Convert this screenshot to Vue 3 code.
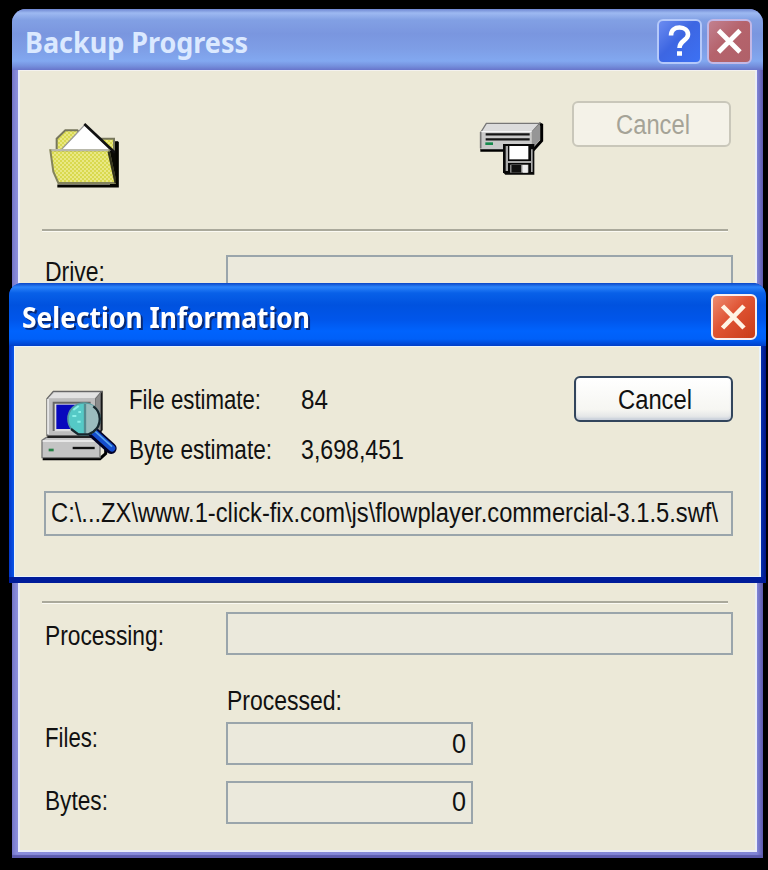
<script setup>
import { h } from 'vue'

// Single line of dialog text, condensed to a given advance width.
const Label = (props) =>
  h('svg', { class: 'label', width: props.w, height: 32 }, [
    h('text', { x: 0, y: 24, textLength: props.w, lengthAdjust: 'spacingAndGlyphs', fill: 'currentColor' }, props.text),
  ])
Label.props = ['text', 'w']

const counters = [
  { name: 'Files:', w: 53, value: '0', cls: 'files' },
  { name: 'Bytes:', w: 63, value: '0', cls: 'bytes' },
]
</script>

<template>
  <main class="desktop">
    <section class="window back">
      <header class="titlebar">
        <Label class="title" text="Backup Progress" :w="223" />
        <button class="caption help">
          <svg width="41" height="41" viewBox="2 2 41 41" fill="none" stroke="#fff" stroke-width="4.6">
            <path d="M14 16.500c0-5.500 4-8 8.500-8 5 0 8.500 3 8.500 7 0 6-8.500 6-8.500 13.500" />
            <path d="M20 34.500h5" stroke-width="4.500" />
          </svg>
        </button>
        <button class="caption close">
          <svg width="41" height="41" viewBox="2 2 41 41" stroke="#fff" stroke-width="4.8"><path d="M11.500 11.500 33 33M33 11.500 11.500 33" /></svg>
        </button>
      </header>
      <div class="body">
        <div class="top">
          <svg class="folder" width="100" height="90" viewBox="0 0 300 270">
            <defs>
              <pattern id="weave" width="12" height="12" patternUnits="userSpaceOnUse">
                <rect width="12" height="12" fill="#d9d94f" />
                <path d="M0 0h6v6H0zM6 6h6v6H6z" fill="#e9e884" />
              </pattern>
            </defs>
            <path d="M68 231h178V94h-9L222 116v110z" fill="#0a0a04" />
            <path d="M62 121V86L88 61H124L148 86H234V120z" fill="url(#weave)" stroke="#77775c" stroke-width="6" />
            <path d="M76 119 147 44 224 120z" fill="#fff" stroke="#999" stroke-width="4" />
            <path d="M145 42 237 128" stroke="#111" stroke-width="8" />
            <path d="M43 121H218L239 219H67L52 185z" fill="url(#weave)" stroke="#84845b" stroke-width="6" />
            <path d="M46 120H218" stroke="#b9b9ab" stroke-width="6" />
            <path d="M218 125 239 219" stroke="#33331c" stroke-width="7" />
            <path d="M64 228H244V95" fill="none" stroke="#050500" stroke-width="9" />
          </svg>
          <svg class="drive" width="90" height="75" viewBox="0 0 270 225">
            <path d="M46 121H204L230 92V45L222 41" fill="none" stroke="#000" stroke-width="9" />
            <path d="M64 40H224L201 66H48z" fill="#dcdcdc" stroke="#777" stroke-width="4" />
            <path d="M48 63H200V118H48z" fill="#c9c9c9" />
            <path d="M200 65 225 42V90L200 118z" fill="#969696" />
            <path d="M47 66V115" stroke="#777" stroke-width="5" />
            <path d="M50 65H200" stroke="#f6f6f6" stroke-width="4" />
            <path d="M62 73H194M62 88H194" stroke="#151515" stroke-width="7" />
            <path d="M61 101H84" stroke="#168a4d" stroke-width="8" />
            <path d="M114 102H208V194H121L114 187z" fill="#080808" />
            <path d="M122 108h7v75h-7zM198 118h5v68h-5z" fill="#aaa" />
            <path d="M133 108H190V148H133z" fill="#fff" />
            <path d="M127 153H198V159H127z" fill="#aaa" />
            <path d="M136 164H190V188H136z" fill="#c7c7c7" />
            <path d="M139 165H169V188H139z" fill="#111" />
            <path d="M174 165H188V188H174z" fill="#eee" />
          </svg>
          <button class="push disabled" disabled><Label text="Cancel" :w="74" /></button>
        </div>
        <div class="rule"></div>
        <div class="row drive-row"><Label text="Drive:" :w="60" /><div class="field"></div></div>
        <div class="rule second"></div>
        <div class="row processing-row"><Label text="Processing:" :w="119" /><div class="field"></div></div>
        <div class="heading"><Label text="Processed:" :w="115" /></div>
        <div v-for="c in counters" :key="c.name" class="row" :class="c.cls">
          <Label :text="c.name" :w="c.w" />
          <div class="field short"><Label :text="c.value" :w="14" /></div>
        </div>
      </div>
    </section>

    <section class="window front">
      <header class="titlebar">
        <Label class="title" text="Selection Information" :w="288" />
        <button class="caption close">
          <svg width="42" height="42" viewBox="2 2 42 42" stroke="#fff4e4" stroke-width="4.6"><path d="M11.500 12 33 34M33 12 11.500 34" /></svg>
        </button>
      </header>
      <div class="body">
        <div class="top">
          <svg class="computer" width="100" height="95" viewBox="0 0 300 285">
            <path d="M198 55 218 48V165L202 190H56V174z" fill="#171717" />
            <path d="M51 71 70 49H215L197 72V182H51z" fill="#bdbdbd" stroke="#666" stroke-width="4" />
            <path d="M55 70 72 53H209L194 69z" fill="#e2e2e2" />
            <path d="M197 72 212 53V165L197 182z" fill="#8b8b8b" />
            <path d="M54 72V178" stroke="#eee" stroke-width="5" />
            <path d="M71 84H181V169H71z" fill="#dedede" />
            <path d="M71 168V83H182" fill="none" stroke="#666" stroke-width="6" />
            <path d="M79 89H174V162H79z" fill="#0808bd" />
            <path d="M38 251H210L227 236V190" fill="none" stroke="#000" stroke-width="9" />
            <path d="M36 196 49 187H223L210 198V248H36z" fill="#c4c4c4" stroke="#777" stroke-width="4" />
            <path d="M52 186H200" stroke="#222" stroke-width="6" />
            <path d="M38 198H210" stroke="#f3f3f3" stroke-width="5" />
            <path d="M128 219H194" stroke="#111" stroke-width="7" />
            <path d="M56 225H71" stroke="#278247" stroke-width="8" />
            <path d="M192 174 243 220" stroke="#020228" stroke-width="34" stroke-linecap="round" />
            <path d="M192 172 246 220" stroke="#154dce" stroke-width="20" stroke-linecap="round" />
            <path d="M194 168 246 215" stroke="#5aa7ed" stroke-width="5" />
            <circle cx="162" cy="132" r="48" fill="#55c9c6" stroke="#559c9f" stroke-width="5" />
            <path d="M166 86A46 46 0 0 1 166 178z" fill="#9bbcbd" />
            <path d="M165 87V176" stroke="#558c90" stroke-width="7" />
            <path d="M190 94A47 47 0 0 1 190 170L176 178H145L123 162" fill="none" stroke="#17262c" stroke-width="7" />
            <path d="M130 105 146 93M127 123h12M142 140h10M145 111h8" stroke="#8aefe8" stroke-width="6" />
          </svg>
          <div class="facts">
            <Label text="File estimate:" :w="132" /><Label text="84" :w="27" />
            <Label text="Byte estimate:" :w="143" /><Label text="3,698,451" :w="103" />
          </div>
          <button class="push"><Label text="Cancel" :w="74" /></button>
        </div>
        <div class="field path"><Label text="C:\...ZX\www.1-click-fix.com\js\flowplayer.commercial-3.1.5.swf\" :w="667" /></div>
      </div>
    </section>
  </main>
</template>

<style>
body { background: #000; margin: 0; }
</style>

<style scoped>
* { box-sizing: border-box; }
.desktop { position: relative; width: 768px; height: 870px; background: #000; font: 27px "Liberation Sans", sans-serif; color: #111; padding: 9px 5px 0 12px; }
.label { display: block; overflow: visible; flex: none; }
button { padding: 0; font: inherit; color: inherit; }
.window { display: flex; flex-direction: column; }
.body { flex: 1; background: #ece9d8; min-height: 0; }
.titlebar { display: flex; flex: none; }
.title { font-family: "Noto Sans", "Open Sans", sans-serif; font-weight: bold; font-size: 28px; margin-right: auto; }

.back { width: 751px; height: 849px; padding: 0 6px 6px; border-radius: 14px 14px 0 0; background: linear-gradient(90deg, #7476c8, #8a8ddc 5px, #8185d6 745px, #5c59ac); box-shadow: inset 0 -3px 1px #5c5bad; }
.back > .titlebar { height: 61px; margin: 0 -6px; padding: 10px 11px 0 13px; border-radius: 14px 14px 0 0; background: linear-gradient(#6e86d2 0, #9db9f1 4px, #82a0e4 11px, #7a96df 25px, #7e9ee6 40px, #82a8f0 52px, #7590dd 57px, #6875cb 61px); }
.back .title { color: #dbe9ff; margin-top: 10px; }
.back > .body { border: 2px solid #eaedf8; border-top: 1px solid #f4f2ef; }

.caption { width: 45px; height: 45px; border: 2px solid #b5c9fa; border-radius: 6px; display: grid; place-items: center; flex: none; }
.help { background: linear-gradient(135deg, #6c8cf0, #3d66e2 45%, #3c71f4); margin-right: 5px; }
.back .close { background: linear-gradient(135deg, #c28190, #b5636c 45%, #b06169); border-color: #c3b8e6; }

.back .top { display: flex; align-items: flex-start; height: 158px; }
.folder { margin: 39px 0 0 16px; }
.drive { margin: 39px 17px 0 329px; }
.push { width: 159px; height: 46px; border: 2px solid #32455c; border-radius: 6px; background: linear-gradient(#fff, #f6f6f2 75%, #dcdfe2); display: flex; justify-content: center; }
.disabled { background: #f4f2e8; border-color: #c9c7ba; color: #a5a397; margin-top: 30px; padding: 7px 0 0 3px; }

.rule { width: 686px; height: 3px; margin-left: 22px; background: #aaa99b; border-bottom: 1px solid #fbfaf3; }
.row { display: grid; grid-template-columns: 181px auto; justify-content: start; align-items: start; padding-left: 25px; height: 43px; }
.field { width: 507px; height: 43px; border: 2px solid #9aa5ab; background: #ebe9dc; display: flex; }
.short { width: 247px; justify-content: flex-end; padding-right: 5px; }
.drive-row { margin-top: 23px; }
.drive-row > .label { margin-top: 2px; }
.second { margin-top: 303px; }
.processing-row { margin-top: 8px; }
.processing-row > .label { margin-top: 9px; }
.heading { padding: 31px 0 0 207px; height: 67px; }
.files > .label { margin-top: 1px; }
.files .field .label { margin-top: 5px; }
.bytes { margin-top: 16px; }
.bytes > .label { margin-top: 5px; }
.bytes .field .label { margin-top: 4px; }

.front { position: absolute; left: 9px; top: 283px; width: 757px; height: 300px; padding: 0 5px 6px; border-radius: 13px 13px 0 0; background: linear-gradient(90deg, #0436c8, #0855e8 5px, #0436b8 751px, #001584); box-shadow: inset 0 -6px 0 #001c9a; }
.front > .titlebar { height: 63px; margin: 0 -5px; padding: 11px 9px 0 13px; border-radius: 13px 13px 0 0; background: linear-gradient(#0a45c6 0, #2b83fa 4px, #0860e8 10px, #0052df 22px, #0056eb 37px, #0063fd 48px, #0060f8 56px, #003fc8 63px); }
.front .title { color: #fff; margin-top: 10px; filter: drop-shadow(2px 2px 0 #092a77); }
.front .caption { width: 46px; height: 46px; border-color: #f8eeee; background: linear-gradient(135deg, #ee8c70, #df5333 45%, #c93d19); }
.front > .body { border: 1px solid #e9f3fb; border-right-width: 2px; }
.front .top { display: flex; align-items: flex-start; height: 144px; }
.computer { flex: none; margin: 28px 0 0 15px; }
.facts { display: grid; grid-template-columns: 172px 272px; row-gap: 18px; flex: none; margin: 38px 0 0 -1px; }
.front .push { margin: 29px 0 0 1px; padding: 7px 0 0 3px; box-shadow: inset 0 -2px 2px #cbd1dc; flex: none; }
.path { width: 689px; height: 45px; margin-left: 29px; padding: 5px 0 0 5px; }
.disabled { position: relative; flex: none; }
</style>
